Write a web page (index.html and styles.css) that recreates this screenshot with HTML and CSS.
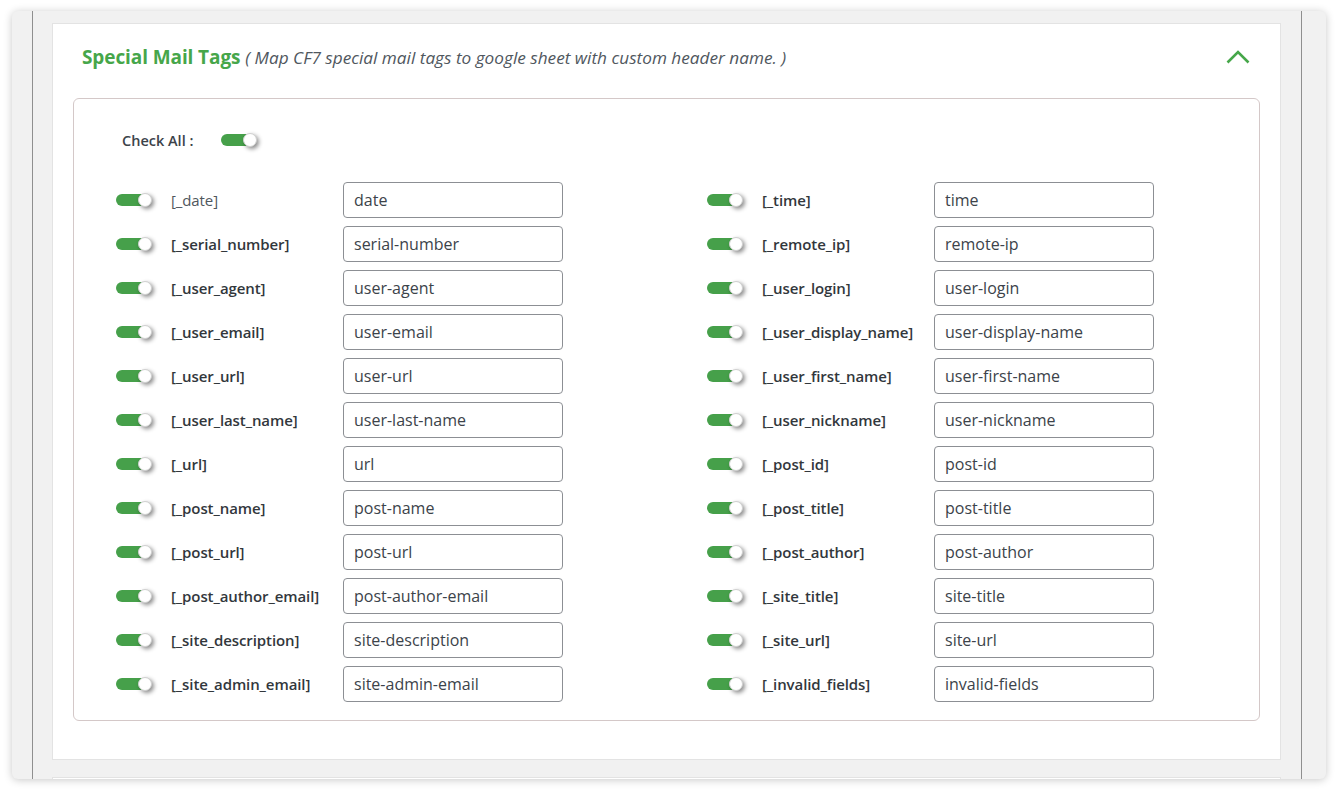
FILE: index.html
```html
<!DOCTYPE html>
<html>
<head>
<meta charset="utf-8">
<link rel="stylesheet" href="styles.css">
</head>
<body>
<div class="window">
  <div class="frame">
    <div class="card">
      <div class="card-head">
        <h2 class="title">Special Mail Tags <span class="sub">( Map CF7 special mail tags to google sheet with custom header name. )</span></h2>
        <svg class="chev" width="24" height="14" viewBox="0 0 24 14"><path d="M1.5 12.5 L12 2 L22.5 12.5" fill="none" stroke="#46a74a" stroke-width="2.6"/></svg>
      </div>
      <div class="box">
        <div class="check-all">
          <span class="ca-label">Check All :</span>
          <span class="toggle"><span class="knob"></span></span>
        </div>
        <div class="grid" id="grid"></div>
      </div>
    </div>
    <div class="card next"></div>
  </div>
</div>
<script>
var tags = [
 ["_date","date"],["_time","time"],
 ["_serial_number","serial-number"],["_remote_ip","remote-ip"],
 ["_user_agent","user-agent"],["_user_login","user-login"],
 ["_user_email","user-email"],["_user_display_name","user-display-name"],
 ["_user_url","user-url"],["_user_first_name","user-first-name"],
 ["_user_last_name","user-last-name"],["_user_nickname","user-nickname"],
 ["_url","url"],["_post_id","post-id"],
 ["_post_name","post-name"],["_post_title","post-title"],
 ["_post_url","post-url"],["_post_author","post-author"],
 ["_post_author_email","post-author-email"],["_site_title","site-title"],
 ["_site_description","site-description"],["_site_url","site-url"],
 ["_site_admin_email","site-admin-email"],["_invalid_fields","invalid-fields"]
];
var g = document.getElementById('grid');
tags.forEach(function(t,i){
  var d = document.createElement('div');
  d.className = 'item';
  d.innerHTML = '<span class="toggle"><span class="knob"></span></span>' +
    '<span class="tag' + (i===0?' light':'') + '">[' + t[0] + ']</span>' +
    '<input class="field" type="text" value="' + t[1] + '">';
  g.appendChild(d);
});
</script>
</body>
</html>
```
FILE: styles.css
```css
* { box-sizing: border-box; }
html, body { margin: 0; padding: 0; background: #fff; }
body {
  padding: 11px 12px 13px 12px;
  font-family: "Open Sans", "Noto Sans", sans-serif;
  height: 792px;
  overflow: hidden;
}
.window {
  height: 768px;
  background: #f1f1f1;
  border-radius: 6px;
  box-shadow: 0 1px 8px rgba(0,0,0,0.22);
  padding: 0 24px 0 20px;
  overflow: hidden;
}
.frame {
  height: 100%;
  border-left: 1px solid #8f8f8f;
  border-right: 1px solid #8f8f8f;
  padding: 12px 20px 0 19px;
  overflow: hidden;
}
.card {
  background: #fff;
  border: 1px solid #e3e3e3;
  padding: 0 20px 38px 20px;
}
.card.next { margin-top: 17px; height: 40px; padding: 0; }
.card-head {
  display: flex;
  align-items: center;
  justify-content: space-between;
  height: 74px;
  padding: 0 10px 8px 9px;
}
.title {
  margin: 0;
  font-size: 19px;
  font-weight: 700;
  color: #46a64a;
  letter-spacing: -0.1px;
}
.sub {
  font-size: 17.2px;
  font-weight: 400;
  font-style: italic;
  color: #50575e;
  letter-spacing: 0;
}
.chev { display: block; margin-top: -1px; }
.box {
  border: 1px solid #d4c8c8;
  border-radius: 6px;
  padding: 31px 42px 18px 42px;
}
.check-all {
  display: flex;
  align-items: center;
  height: 20px;
  padding-left: 6px;
}
.ca-label {
  font-size: 14.5px;
  font-weight: 600;
  color: #3c434a;
  width: 99px;
}
.toggle {
  position: relative;
  display: inline-block;
  width: 35px;
  height: 12px;
  background: #46a04a;
  border-radius: 6px;
  flex: none;
}
.knob {
  position: absolute;
  left: 22px;
  top: -1px;
  width: 14px;
  height: 14px;
  border-radius: 50%;
  background: #fff;
  border: 1px solid #d0d0d0;
  box-shadow: 2px 2px 4px rgba(0,0,0,0.45);
}
.grid {
  margin-top: 32px;
  display: grid;
  grid-template-columns: 591px 1fr;
  row-gap: 8px;
}
.item {
  display: flex;
  align-items: center;
  height: 36px;
}
.item .toggle { margin-right: 20px; }
.tag {
  width: 172px;
  font-size: 15px;
  font-weight: 600;
  color: #32373c;
  white-space: nowrap;
  letter-spacing: -0.1px;
}
.tag.light { font-weight: 400; color: #50575e; }
.field {
  width: 220px;
  height: 36px;
  border: 1px solid #8c8f94;
  border-radius: 4px;
  padding: 0 10px;
  font-family: "Open Sans", "Noto Sans", sans-serif;
  font-size: 16px;
  color: #3c434a;
  background: #fff;
  outline: none;
}
```
